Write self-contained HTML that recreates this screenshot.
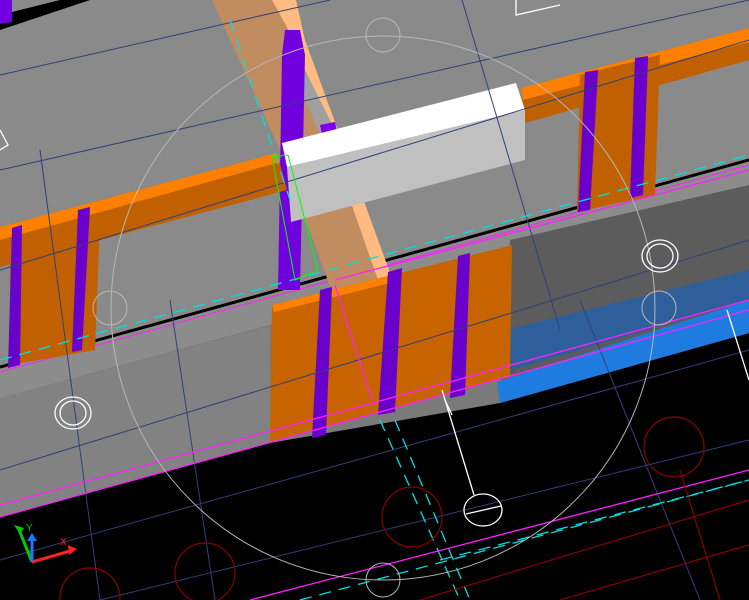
<!DOCTYPE html>
<html><head><style>html,body{margin:0;padding:0;background:#000;overflow:hidden}svg{display:block}</style></head>
<body>
<svg width="749" height="600" viewBox="0 0 749 600" xmlns="http://www.w3.org/2000/svg">
<rect width="749" height="600" fill="#000"/>
<polygon points="0,0 749,0 749,160 0,367" fill="#8a8a8a"/>
<polygon points="0,367 749,160 749,333 500,403 270,443 0,517" fill="#7a7a7a"/>
<polygon points="0,367 749,160 749,195 0,398" fill="#8c8c8c"/>
<polygon points="0,398 270,326 270,443 0,517" fill="#828282"/>
<polygon points="510,240 749,185 749,333 500,403" fill="#5c5c5c"/>
<polygon points="505,330 749,270 749,300 505,372" fill="#2f5f9a"/>
<polygon points="497,382 749,300 749,333 500,403" fill="#1e7be0"/>
<line x1="0" y1="367" x2="749" y2="160" stroke="#000" stroke-width="3"/>
<line x1="0" y1="372" x2="749" y2="165" stroke="#ff20ff" stroke-width="1"/>
<polygon points="0,15 60,0 90,0 0,30" fill="#000"/>
<polygon points="0,0 12,0 12,22 0,24" fill="#7000e0"/>
<polygon points="212,0 272,0 300,40 395,300 335,300 280,150" fill="#c08c60"/>
<polygon points="272,0 296,0 305,40 400,300 385,300 294,40" fill="#ffbb80"/>
<polygon points="295,75 305,70 335,130 320,135" fill="#a0a0a0"/>
<polygon points="285,30 300,30 305,55 300,290 278,290 282,55" fill="#7000dd"/>
<polygon points="320,125 335,122 340,145 325,148" fill="#7a00ee"/>
<polygon points="0,227 277,153 287,190 0,267" fill="#c06000"/>
<polygon points="0,227 277,153 280,162 0,240" fill="#ff8000"/>
<polygon points="10,245 100,220 95,350 10,365" fill="#c06000"/>
<polygon points="521,88 749,28 749,60 525,123" fill="#c06000"/>
<polygon points="521,88 749,28 749,42 523,100" fill="#ff8000"/>
<polygon points="580,75 660,55 655,195 577,212" fill="#c06000"/>
<polygon points="272,305 512,245 510,377 270,443" fill="#c86400"/>
<polygon points="272,305 400,273 402,280 274,312" fill="#ff8000"/>
<g fill="#6a00cc">
<polygon points="12,228 22,225 20,365 8,368"/>
<polygon points="78,210 90,207 82,350 72,352"/>
<polygon points="585,72 598,70 590,210 578,212"/>
<polygon points="635,58 648,56 643,195 630,198"/>
<polygon points="320,290 332,287 326,435 312,438"/>
<polygon points="388,272 402,268 395,412 378,415"/>
<polygon points="458,256 470,253 465,395 450,398"/>
</g>
<polygon points="282,143 516,83 525,110 287,167" fill="#fff"/>
<polygon points="287,167 525,110 525,160 291,222" fill="#c0c0c0"/>
<g stroke="#304078" stroke-width="1" fill="none">
<line x1="0" y1="75" x2="330" y2="0"/>
<line x1="0" y1="170" x2="749" y2="0"/>
<line x1="0" y1="270" x2="749" y2="40"/>
<line x1="0" y1="470" x2="749" y2="240"/>
<line x1="0" y1="560" x2="749" y2="350"/>
<line x1="100" y1="600" x2="749" y2="440"/>
<line x1="462" y1="0" x2="560" y2="330"/>
<line x1="40" y1="150" x2="100" y2="600"/>
<line x1="170" y1="300" x2="215" y2="600"/>
<line x1="580" y1="300" x2="700" y2="600"/>
</g>
<g stroke="#00e0e0" stroke-width="1.3" stroke-dasharray="12,8" fill="none">
<line x1="0" y1="360" x2="749" y2="155"/>
<line x1="230" y1="20" x2="290" y2="200"/>
<line x1="380" y1="420" x2="460" y2="600"/>
<line x1="395" y1="420" x2="470" y2="600"/>
<line x1="300" y1="600" x2="749" y2="480"/>
<line x1="440" y1="560" x2="749" y2="480"/>
</g>
<g stroke="#ff20ff" stroke-width="1.3" fill="none">
<line x1="0" y1="505" x2="749" y2="300"/>
<line x1="0" y1="517" x2="749" y2="310"/>
<line x1="250" y1="600" x2="749" y2="470"/>
<line x1="335" y1="285" x2="372" y2="400"/>
<line x1="335" y1="280" x2="749" y2="170"/>
</g>
<g stroke="#8a0000" stroke-width="1.2" fill="none">
<circle cx="412" cy="517" r="30"/>
<circle cx="674" cy="447" r="30"/>
<circle cx="205" cy="573" r="30"/>
<circle cx="90" cy="598" r="30"/>
<line x1="420" y1="600" x2="749" y2="500"/>
<line x1="560" y1="600" x2="749" y2="545"/>
<line x1="680" y1="470" x2="720" y2="600"/>
</g>
<g stroke="#b8b8b8" stroke-width="1" fill="none">
<circle cx="383" cy="308" r="272"/>
<ellipse cx="383" cy="35" rx="17" ry="17"/>
<ellipse cx="110" cy="308" rx="17" ry="17"/>
<ellipse cx="659" cy="308" rx="17" ry="17"/>
<ellipse cx="383" cy="580" rx="17" ry="17"/>
</g>
<g stroke="#fff" stroke-width="1.3" fill="none">
<ellipse cx="660" cy="256" rx="18" ry="16"/><ellipse cx="660" cy="256" rx="13" ry="12"/>
<ellipse cx="73" cy="413" rx="18" ry="16"/><ellipse cx="73" cy="413" rx="13" ry="12"/>
<ellipse cx="483" cy="510" rx="19" ry="16"/>
<line x1="466" y1="514" x2="501" y2="506"/>
<line x1="442" y1="390" x2="474" y2="495"/>
<line x1="445" y1="400" x2="452" y2="415"/>
<line x1="727" y1="310" x2="749" y2="380"/>
<polyline points="516,0 516,15 560,5"/>
<polyline points="0,130 8,145 0,150"/>
</g>
<g stroke="#00ff00" stroke-width="1" fill="none">
<polygon points="272,157 288,155 318,270 295,280"/>
</g>
<g stroke-width="3" fill="none">
<line x1="32" y1="562" x2="18" y2="527" stroke="#00cc00"/>
<line x1="32" y1="562" x2="70" y2="551" stroke="#ff2020"/>
<line x1="32" y1="562" x2="32" y2="538" stroke="#1a78ff"/>
</g>
<polygon points="14,525 20,534 24,528" fill="#00cc00"/>
<polygon points="77,549 68,545 69,555" fill="#ff2020"/>
<polygon points="32,533 27,541 37,541" fill="#1a78ff"/>
<text x="26" y="531" font-family="Liberation Sans, sans-serif" font-size="10" fill="#00cc00">Y</text>
<text x="60" y="545" font-family="Liberation Sans, sans-serif" font-size="10" fill="#ff2020">X</text>
</svg>
</body></html>
